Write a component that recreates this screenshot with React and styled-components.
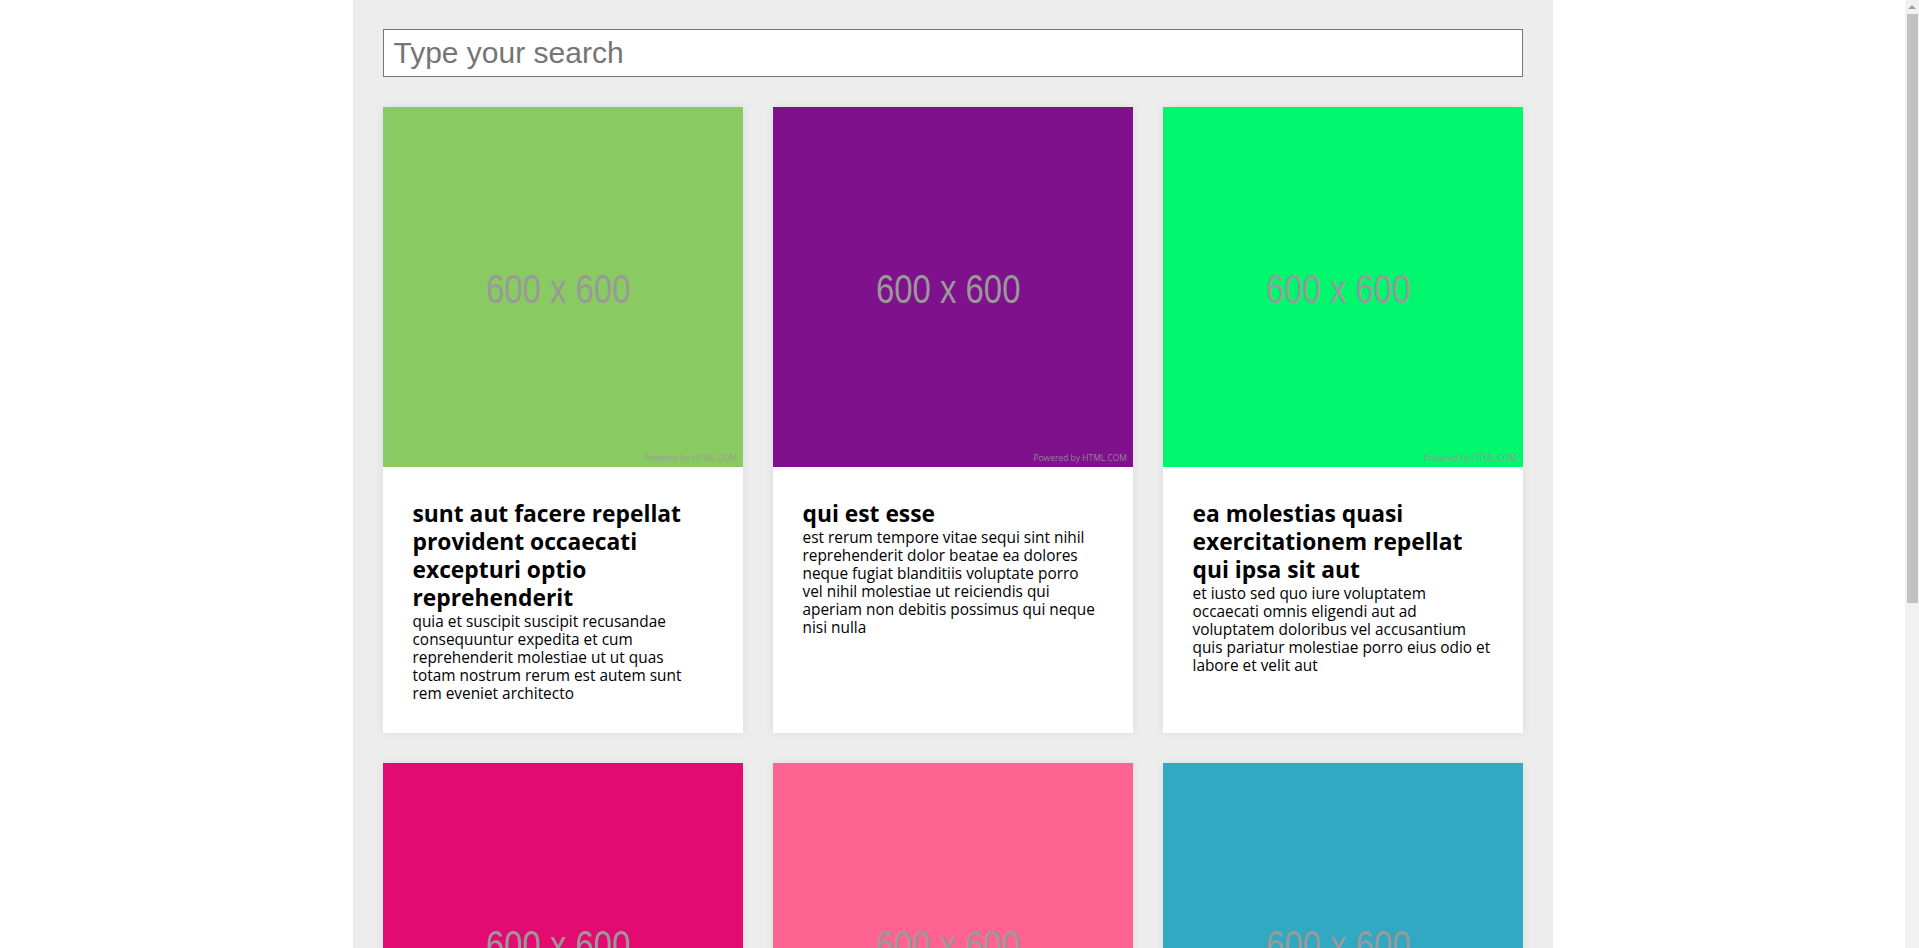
import React, { useState } from "react";
import styled, { createGlobalStyle } from "styled-components";

const GlobalStyle = createGlobalStyle`
  body {
    margin: 0;
    padding-right: 14px;
    background: #ffffff;
    font-family: "Open Sans", "Noto Sans", sans-serif;
    color: #000;
  }
`;

const posts = [
  {
    id: 1,
    color: "#89ca62",
    title: "sunt aut facere repellat provident occaecati excepturi optio reprehenderit",
    body: "quia et suscipit suscipit recusandae\nconsequuntur expedita et cum\nreprehenderit molestiae ut ut quas\ntotam nostrum rerum est autem sunt\nrem eveniet architecto",
  },
  {
    id: 2,
    color: "#7f118c",
    title: "qui est esse",
    body: "est rerum tempore vitae sequi sint nihil\nreprehenderit dolor beatae ea dolores\nneque fugiat blanditiis voluptate porro\nvel nihil molestiae ut reiciendis qui\naperiam non debitis possimus qui neque\nnisi nulla",
  },
  {
    id: 3,
    color: "#00f66c",
    title: "ea molestias quasi exercitationem repellat qui ipsa sit aut",
    body: "et iusto sed quo iure voluptatem\noccaecati omnis eligendi aut ad\nvoluptatem doloribus vel accusantium\nquis pariatur molestiae porro eius odio et\nlabore et velit aut",
  },
  {
    id: 4,
    color: "#e30b72",
    title: "eum et est occaecati",
    body: "ullam et saepe reiciendis voluptatem adipisci sit amet autem assumenda provident rerum culpa quis hic commodi nesciunt rem tenetur doloremque ipsam iure quis sunt voluptatem rerum illo velit",
  },
  {
    id: 5,
    color: "#ff6392",
    title: "nesciunt quas odio",
    body: "repudiandae veniam quaerat sunt sed alias aut fugiat sit autem sed est voluptatem omnis possimus esse voluptatibus quis est aut tenetur dolor neque",
  },
  {
    id: 6,
    color: "#31a9c2",
    title: "dolorem eum magni eos aperiam quia",
    body: "ut aspernatur corporis harum nihil quis provident sequi mollitia nobis aliquid molestiae perspiciatis et ea nemo ab reprehenderit accusantium quas voluptate dolores velit et doloremque molestiae",
  },
];

const Page = styled.main`
  max-width: 1200px;
  min-height: 100vh;
  margin: 0 auto;
  padding: 29px 30px 30px;
  box-sizing: border-box;
  background: #ededed;
`;

const SearchInput = styled.input`
  display: block;
  width: 100%;
  height: 48px;
  box-sizing: border-box;
  padding: 0 10px;
  border: 1px solid #767676;
  border-radius: 0;
  background: #fff;
  font-family: "Liberation Sans", Arial, sans-serif;
  font-size: 30px;
  color: #222;
  outline: none;

  &::placeholder {
    color: #757575;
  }
`;

const Grid = styled.section`
  display: grid;
  grid-template-columns: repeat(3, 1fr);
  gap: 30px;
  margin-top: 30px;
`;

const Card = styled.article`
  background: #fff;
  box-shadow: 0 0 10px rgba(0, 0, 0, 0.07);
`;

const Thumb = styled.svg`
  display: block;
  width: 100%;
  height: auto;
`;

const CardBody = styled.div`
  padding: 33px 30px 30px;
`;

const Title = styled.h3`
  margin: 0;
  font-size: 22.8px;
  font-weight: 700;
  line-height: 28px;
`;

const Text = styled.p`
  margin: 1px 0 0;
  font-size: 15.4px;
  line-height: 18px;
  white-space: pre-line;
`;

/* window scrollbar as it shows in the capture */
const ScrollTrack = styled.div`
  position: fixed;
  top: 0;
  right: 0;
  width: 14px;
  height: 100vh;
  background: #f1f1f1;
`;

const ScrollArrow = styled.div`
  margin: 5px auto 0;
  width: 0;
  height: 0;
  border-left: 4px solid transparent;
  border-right: 4px solid transparent;
  border-bottom: 4px solid #a3a3a3;
`;

const ScrollThumb = styled.div`
  margin: 5px 1px 0 2px;
  height: 589px;
  background: #c1c1c1;
`;

const Placeholder = ({ color }) => (
  <Thumb viewBox="0 0 600 600">
    <rect width="600" height="600" fill={color} />
    <text
      x="292"
      y="327"
      textAnchor="middle"
      textLength="241"
      lengthAdjust="spacingAndGlyphs"
      fontFamily="Liberation Sans, Arial, sans-serif"
      fontSize="68"
      fill="#999999"
    >
      600 x 600
    </text>
    <text
      x="590"
      y="590"
      textAnchor="end"
      textLength="156"
      lengthAdjust="spacingAndGlyphs"
      fontFamily="Open Sans, sans-serif"
      fontSize="14"
      fill="#999999"
      fillOpacity="0.85"
    >
      Powered by HTML.COM
    </text>
  </Thumb>
);

const App = () => {
  const [query, setQuery] = useState("");
  const shown = posts.filter((p) =>
    (p.title + " " + p.body).toLowerCase().includes(query.toLowerCase())
  );

  return (
    <>
      <GlobalStyle />
      <Page>
        <SearchInput
          type="text"
          placeholder="Type your search"
          value={query}
          onChange={(e) => setQuery(e.target.value)}
        />
        <Grid>
          {shown.map((post) => (
            <Card key={post.id}>
              <Placeholder color={post.color} />
              <CardBody>
                <Title>{post.title}</Title>
                <Text>{post.body}</Text>
              </CardBody>
            </Card>
          ))}
        </Grid>
      </Page>
      <ScrollTrack aria-hidden="true">
        <ScrollArrow />
        <ScrollThumb />
      </ScrollTrack>
    </>
  );
};

export default App;
